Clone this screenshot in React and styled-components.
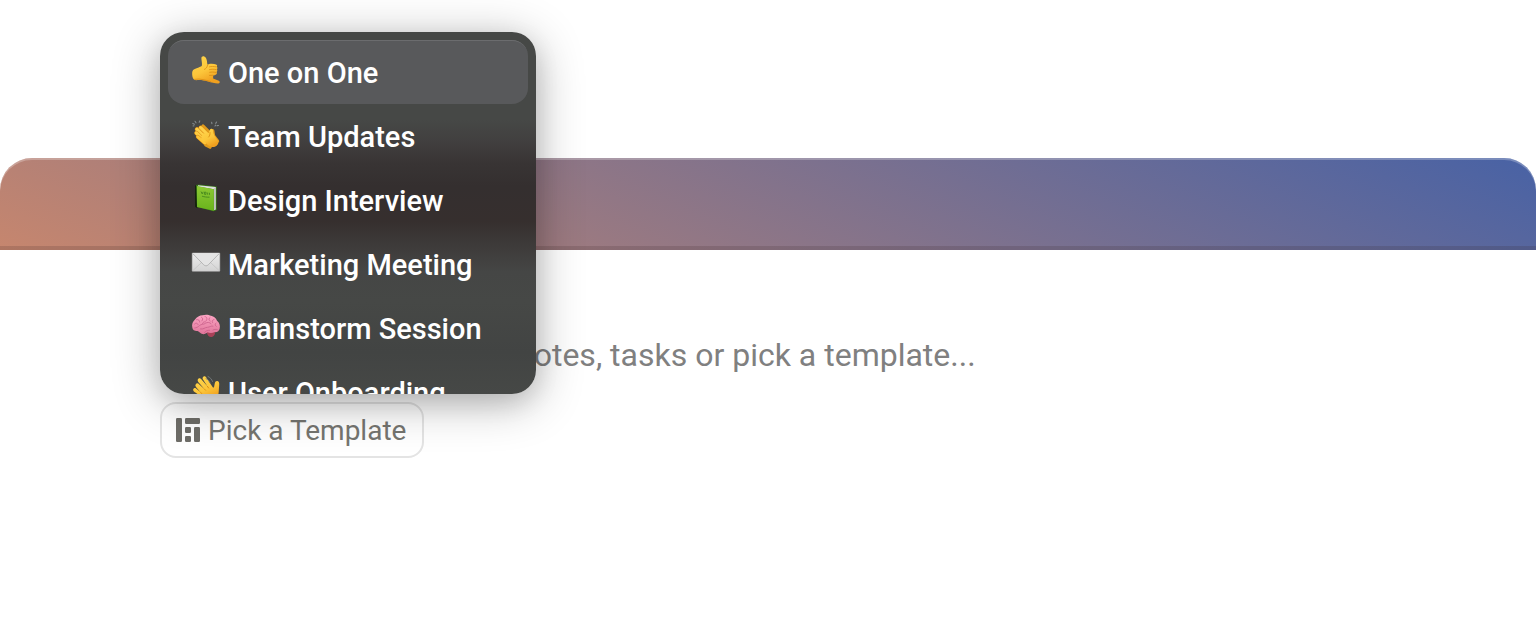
import React from "react";
import styled, { createGlobalStyle } from "styled-components";

const GlobalStyle = createGlobalStyle`
  * { box-sizing: border-box; }
  body {
    margin: 0;
    background: #ffffff;
    font-family: Roboto, "Liberation Sans", sans-serif;
    -webkit-font-smoothing: antialiased;
  }
`;

const Page = styled.main`
  display: flex;
  flex-direction: column;
  padding-top: 158px;
  overflow: hidden;
`;

const Banner = styled.header`
  height: 92px;
  border-radius: 32px 32px 0 0;
  background: linear-gradient(24deg, #c6866e, #4862a5);
  box-shadow: inset 0 2px 0 rgba(255, 255, 255, 0.26), inset 0 -4px 0 rgba(50, 30, 30, 0.16);
`;

const Editor = styled.section`
  display: flex;
  flex-direction: column;
  align-items: flex-start;
  gap: 22px;
  padding: 80px 160px;
`;

const NoteInput = styled.input`
  width: 100%;
  height: 50px;
  padding: 0 0 0 356px;
  border: 0;
  outline: 0;
  background: transparent;
  color: #333333;
  font: 400 32px/50px Roboto, "Liberation Sans", sans-serif;

  &::placeholder {
    color: #808080;
    opacity: 1;
  }
`;

const Picker = styled.div`
  position: relative;
`;

const PickerButton = styled.button`
  display: flex;
  align-items: center;
  gap: 8px;
  height: 56px;
  padding: 0 16px 0 14px;
  border: 2px solid #e4e4e4;
  border-radius: 16px;
  background: #ffffff;
  color: #757570;
  font: 400 28px/32px Roboto, "Liberation Sans", sans-serif;
`;

const Label = styled.span`
  padding-top: 2px;
`;

const Menu = styled.ul`
  position: absolute;
  left: 0;
  bottom: calc(100% + 8px);
  width: 376px;
  height: 362px;
  margin: 0;
  padding: 8px;
  overflow: hidden;
  list-style: none;
  border-radius: 24px;
  background: linear-gradient(
    #464846 88px,
    #413f3f 110px,
    #383434 132px,
    #342f2f 154px,
    #362f2e 190px,
    #3d3a39 212px,
    #454645 240px,
    #464846 270px,
    #424443 320px,
    #464846 362px
  );
  box-shadow: 0 8px 48px rgba(0, 0, 0, 0.3), 0 8px 24px rgba(0, 0, 0, 0.1);
`;

const MenuItem = styled.button`
  display: flex;
  align-items: center;
  gap: 8px;
  width: 100%;
  height: 64px;
  padding: 0 24px;
  border: 0;
  border-radius: 16px;
  background: ${({ $active }) => ($active ? "#58595b" : "transparent")};
  box-shadow: ${({ $active }) => ($active ? "inset 0 2px 0 -1px #6b6c6e" : "none")};
  color: #ffffff;
  font: 500 29px/32px Roboto, "Liberation Sans", sans-serif;
  white-space: nowrap;
`;

const Emoji = styled.svg`
  flex: none;
  width: 28px;
  height: 28px;
  margin-bottom: 4px;
  overflow: visible;
`;

const TemplateIcon = styled.svg`
  flex: none;
  width: 24px;
  height: 24px;
  fill: #6e6d68;
`;

const SkinGradient = ({ id }) => (
  <defs>
    <linearGradient id={id} x1="0" y1="0" x2="0.5" y2="1">
      <stop offset="0" stopColor="#ffd64c" />
      <stop offset="0.6" stopColor="#fcc63b" />
      <stop offset="1" stopColor="#f0a01f" />
    </linearGradient>
  </defs>
);

const CallMeHand = () => (
  <Emoji viewBox="0 0 28 28" aria-hidden="true">
    <SkinGradient id="skin-call" />
    <path
      d="M9.400 2C9.500.4 10.900-.3 12.300.4c1.700.9 2.500 2.800 2.700 5 .1 1.600.2 2.600.8 3.400 1-.9 2.100-1.200 3.800-1.100 1.700 0 3.300.3 4.500.8 1.200.5 1.300 1.500.6 2.200 1 .6.9 1.900.1 2.600.8.6.7 2-.2 2.600.6.8.4 2-.5 2.600-.9.6-1.900.8-2.900 1l-.1 3.100 5.700 2.100c1.500.6 1.200 2.500-.3 2.700-2.800.2-7.300-1-10.500-1.900-3.600-1-6.200-1.500-8.700-1.500-2 0-3.900.6-5.300-.4C.3 22 0 18.500.2 16.200c.1-2.100 1.700-3 4.400-4 2-.8 4.200-1.400 5.200-2.200.7-2.500-.5-5.800-.4-8Z"
      fill="url(#skin-call)"
    />
    <path
      d="M17.500 10.800c1.700-.5 4.400-.4 6.700 0M17.500 13.600c2-.5 4.500-.4 6.700 0M17.700 16.300c2-.4 4-.3 6 .1M15.600 9.100c-.4 2.200-1.600 3.600-3.200 4.300M20.500 19.300l-3 .1M3 23.300c5.500-1 10.500.9 15.500 2.200"
      fill="none"
      stroke="#d98a12"
      strokeWidth="0.800"
      strokeLinecap="round"
    />
  </Emoji>
);

const ClappingHands = () => (
  <Emoji viewBox="0 0 28 28" aria-hidden="true">
    <SkinGradient id="skin-clap" />
    <g fill="none" strokeLinecap="round" strokeLinejoin="round">
      <path d="m11 6.200 8 8M20.600 10.800l.8 5 4 5.200M14 25l4 2" stroke="#e09a1c" strokeWidth="3.600" />
      <path d="m8.600 7.800 9 9" stroke="#d98a12" strokeWidth="4.400" />
      <path d="m8.600 7.800 9 9" stroke="#fed049" strokeWidth="3.400" />
      <path d="m5 9.400 10 10" stroke="#d98a12" strokeWidth="4.400" />
      <path d="m5 9.400 10 10" stroke="#fed049" strokeWidth="3.400" />
      <path d="m4.400 13 9 8.500" stroke="#d98a12" strokeWidth="4.400" />
      <path d="m4.400 13 9 8.500" stroke="#fecb42" strokeWidth="3.400" />
      <path d="m5.800 16.800 7 6.200" stroke="#d98a12" strokeWidth="3.800" />
      <path d="m5.800 16.800 7 6.200" stroke="#fdc53a" strokeWidth="3" />
    </g>
    <path
      d="m10.800 13.500 5.800-.5 1.400-3.400c.6-1.500 2.600-1.100 2.900.5.400 2.200.5 4 1.600 5.600l3.300 4.500c1.200 2 .5 4-1.200 5.500-2.200 1.900-5.400 1.600-7.700 0L9 19.500Z"
      fill="url(#skin-clap)"
    />
    <path d="M18 12.500c.1 1.900-.2 3.300-1.300 4.500" fill="none" stroke="#d98a12" strokeWidth="0.800" strokeLinecap="round" />
    <path
      d="m.8 3.400 1.600.8M3 1.300l1 1.500M7.800.9 7.200 2.300M1 6l1-.2M19.600 2.200l.3 1.400M24.600 2l-.9 1.400M26.500 5.500l-1.400.1M23 6l.6-.9"
      fill="none"
      stroke="#858b8e"
      strokeWidth="1.100"
      strokeLinecap="round"
    />
  </Emoji>
);

const GreenBook = () => (
  <Emoji viewBox="0 0 28 28" aria-hidden="true">
    <defs>
      <linearGradient id="book-cover" x1="0" y1="0" x2="0" y2="1">
        <stop offset="0" stopColor="#8dc934" />
        <stop offset="1" stopColor="#69b31c" />
      </linearGradient>
    </defs>
    <path d="M3.100 1.500 5.300.8v23.400l-2.200-1.500Z" fill="#12230b" />
    <path d="m4 1 3-.4 17.700 2V26l-3 1.200L5 23Z" fill="#39771a" />
    <path d="m6 1.200 17.800 1.900v22.400l-2 .8V5.300L6 2.500Z" fill="#dedede" />
    <path d="M22.700 4.200v21.500" stroke="#9d9d9d" strokeWidth="0.600" />
    <path d="m5 2.100 16.800 3.100v21.500L5 22.900Z" fill="url(#book-cover)" />
    <path
      d="m9 7.500 1.200 2.400 1-2.100m1.300.3-.2 2.100 1.600.2.200-2.100-1.600-.2m3.200.4-.1 2.200m1.900-1.900v2M10 12.200c2.500.7 4.500 1 7.500 1"
      fill="none"
      stroke="#3f801c"
      strokeWidth="0.800"
    />
  </Emoji>
);

const Envelope = () => (
  <Emoji viewBox="0 0 28 28" aria-hidden="true">
    <defs>
      <linearGradient id="envelope-paper" x1="0" y1="0" x2="0" y2="1">
        <stop offset="0" stopColor="#ececec" />
        <stop offset="1" stopColor="#d3d3d3" />
      </linearGradient>
    </defs>
    <rect x="0.200" y="5" width="27.600" height="18.200" rx="0.500" fill="url(#envelope-paper)" stroke="#c4c4c4" strokeWidth="0.500" />
    <path d="m.8 22.700 9.800-9.200M27.200 22.700l-9.800-9.200" fill="none" stroke="#c0c0c0" strokeWidth="0.700" />
    <path d="m.8 5.600 10.700 11c1.700 1.700 3.300 1.700 5 0l10.700-11" fill="#e4e4e4" stroke="#a9a9a9" strokeWidth="0.800" />
  </Emoji>
);

const Brain = () => (
  <Emoji viewBox="0 0 28 28" aria-hidden="true">
    <defs>
      <linearGradient id="brain-tissue" x1="0" y1="0" x2="0" y2="1">
        <stop offset="0" stopColor="#fca5c3" />
        <stop offset="1" stopColor="#e0769b" />
      </linearGradient>
    </defs>
    <path d="M14.500 20c2-2 7.200-2.200 8.300-.5.900 2-.5 5-3.300 5.500-1.800.3-4-1-5-5Z" fill="#a94158" />
    <path
      d="M.3 15.500C-.4 12.600.7 9.400 3 7.500c1.700-2.600 4.800-4.300 7.500-4.300 3-1 6.300-.6 8.500.6 3 .6 5.200 2.700 6 5 2.400 1.800 3.400 5 2.700 7.600-.4 2.600-2.700 4-5 3.700-2.400 1.200-5.400 1-7.200.2-1.700 2-5.300 2.600-7 .7-1.700-1-1.900-1.800-3.100-2C3.300 19.300.7 18.500.3 15.500Z"
      fill="url(#brain-tissue)"
    />
    <path
      d="M2.500 12c1.200-1.400 3-1 3.600.5M4.500 7.700c2-.5 3.300.7 3.200 2.400M9.500 5.200c1.500.7 1.600 2.300.4 3.700M13 4.500c2.200.5 2.500 2.500 1.200 4.200M18 5.500c-1.500 1-1.500 2.600.2 3.500M22 7.500c-1.700.4-2.200 1.600-1.500 3M2.700 16c2-.2 3.300-1 4.500-2.200 2.200-2 4.600-1.100 6.300-2.500 1.800-1.400 4.300-1 5.500.3M8.500 17c2.800.7 4.400-1.700 7-1.700 2.200 0 3.500-1.800 5.500-1.200M12.500 20.500c1.200-2 3.300-2.200 5-2.200M21 18c1.200-.7 2.700-.8 4.300-.4M24 11c-1.300 1-1 2.500.2 3.400M10.500 11.500c.5-1.500 1.700-1.900 3-1.700"
      fill="none"
      stroke="#c9608a"
      strokeWidth="0.800"
      strokeLinecap="round"
    />
  </Emoji>
);

const WavingHand = () => (
  <Emoji viewBox="0 0 28 28" aria-hidden="true">
    <SkinGradient id="skin-wave" />
    <path
      d="M3.800 8.300c.8-1.500 2.400-1 3.500.1l5 4.500-6-7c-1-1.300-.8-2.800.3-3.400 1.200-.6 2.200.1 3.100 1.200l5.700 6.600-4.400-6.800c-.8-1.300-.4-2.500.6-3 1.200-.5 2.200.2 3 1.400l6 9.100c.6.900 1.300.8 1.500-.3l.7-3.500c.4-1.700 1.400-2.500 2.700-2.200 1.600.4 1.800 1.800 1.700 3.800l-.5 7.200c-.3 4.500-2.800 8.600-7.500 9.100-3.500.4-6.500-1.200-9-3.900L1.900 15.500c-1.200-1.300-.9-2.600.1-3.200 1.200-.7 2.200.2 3.300 1.200l3.200 2.800-4.300-5C3.300 10.300 3.100 9.500 3.800 8.300Z"
      fill="url(#skin-wave)"
    />
    <path
      d="m12.300 12.900 1.200 1.300M15.400 10.300l1.200 1.700M8.500 16.300l1.700 1.600"
      fill="none"
      stroke="#d98a12"
      strokeWidth="0.900"
      strokeLinecap="round"
    />
    <path
      d="M16 .5c2.300 1 3.800 2.800 4.500 5M14 2.600c1.900.8 3.200 2.300 4 4.200"
      fill="none"
      stroke="#777d80"
      strokeWidth="0.900"
      strokeLinecap="round"
    />
  </Emoji>
);

const templates = [
  { name: "One on One", icon: CallMeHand },
  { name: "Team Updates", icon: ClappingHands },
  { name: "Design Interview", icon: GreenBook },
  { name: "Marketing Meeting", icon: Envelope },
  { name: "Brainstorm Session", icon: Brain },
  { name: "User Onboarding", icon: WavingHand },
];

export default function App() {
  return (
    <>
      <GlobalStyle />
      <Page>
        <Banner />
        <Editor>
          <NoteInput type="text" aria-label="Notes" placeholder="notes, tasks or pick a template..." />
          <Picker>
            <PickerButton type="button">
              <TemplateIcon viewBox="0 0 24 24" aria-hidden="true">
                <rect width="6" height="24" rx="1.200" />
                <rect x="9" width="15" height="6" rx="1.200" />
                <rect x="9" y="9" width="6" height="6" rx="1.200" />
                <rect x="9" y="18" width="6" height="6" rx="1.200" />
                <rect x="18" y="9" width="6" height="15" rx="1.200" />
              </TemplateIcon>
              <Label>Pick a Template</Label>
            </PickerButton>
            <Menu>
              {templates.map(({ name, icon: Icon }, index) => (
                <li key={name}>
                  <MenuItem type="button" $active={index === 0}>
                    <Icon />
                    <Label>{name}</Label>
                  </MenuItem>
                </li>
              ))}
            </Menu>
          </Picker>
        </Editor>
      </Page>
    </>
  );
}
